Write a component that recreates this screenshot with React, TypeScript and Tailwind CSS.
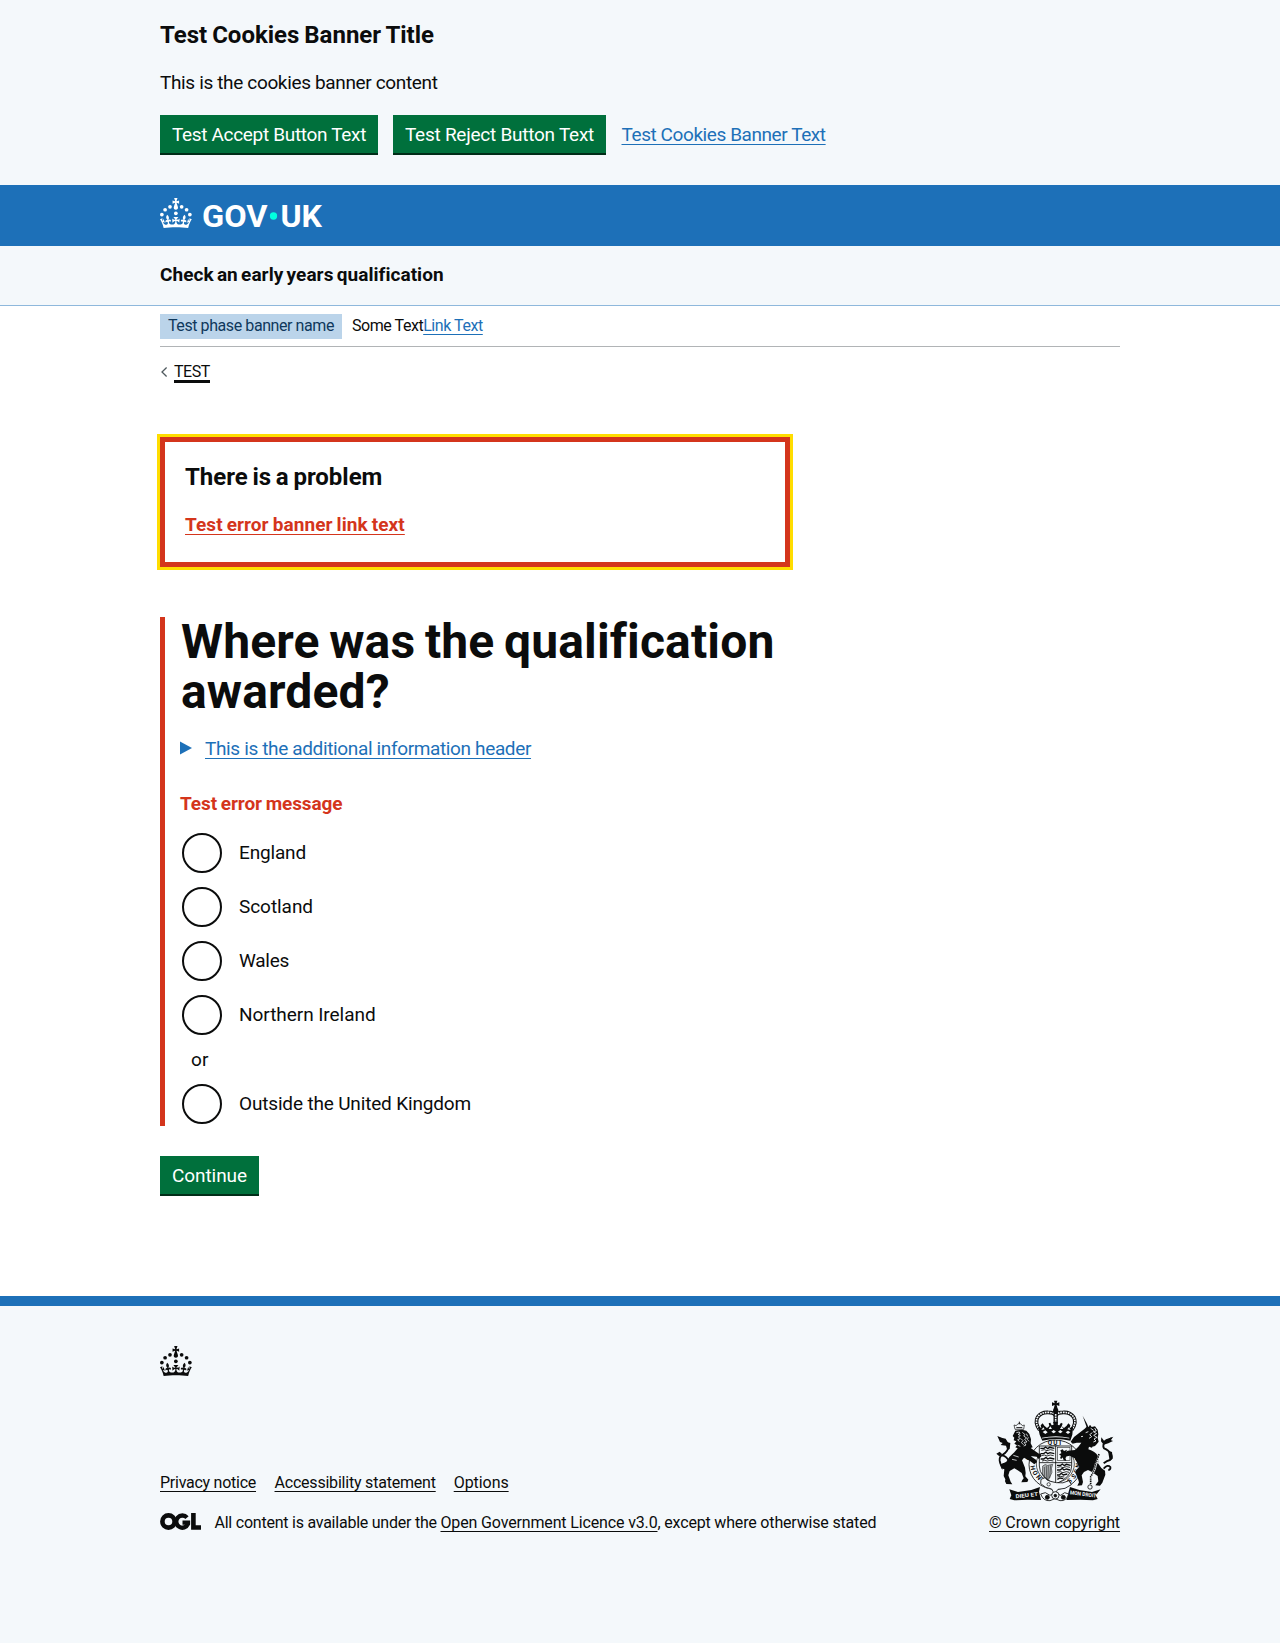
import type { ReactNode } from "react";

const CROWN_PATH =
  "M33.1,9.8c.2-.1.3-.3.5-.5l4.6,2.4v-6.8l-4.6,1.5c-.1-.2-.3-.3-.5-.5l1.9-5.9h-6.7l1.9,5.9c-.2.1-.3.3-.5.5l-4.6-1.5v6.8l4.6-2.4c.1.2.3.3.5.5l-2.6,8c-.9,2.8,1.2,5.7,4.1,5.7h0c3,0,5.1-2.9,4.1-5.7l-2.6-8ZM37,37.9s-3.4,3.8-4.1,6.1c2.2,0,4.2-.5,6.4-2.8l-.7,8.5c-2-2.8-4.4-4.1-5.7-3.8.1,3.1.5,6.7,5.8,7.2,3.7.3,6.7-1.5,7-3.8.4-2.6-2-4.3-3.7-1.6-1.4-4.5,2.4-6.1,4.9-3.2-1.9-4.5-1.8-7.7,2.4-10.9,3,4,2.6,7.3-1.2,11.1,2.4-1.3,6.2,0,4,4.6-1.2-2.8-3.7-2.2-4.2.2-.3,1.7.7,3.7,3,4.2,1.9.3,4.7-.9,7-5.9-1.3,0-2.4.7-3.9,1.7l2.4-8c.6,2.3,1.4,3.7,2.2,4.5.6-1.6.5-2.8,0-5.3l5,1.8c-2.6,3.6-5.2,8.7-7.3,17.5-7.4-1.1-15.7-1.7-24.5-1.7h0c-8.8,0-17.1.6-24.5,1.7-2.1-8.9-4.7-13.9-7.3-17.5l5-1.8c-.5,2.5-.6,3.7,0,5.3.8-.8,1.6-2.3,2.2-4.5l2.4,8c-1.5-1-2.6-1.7-3.9-1.7,2.3,5,5.2,6.2,7,5.9,2.3-.4,3.3-2.4,3-4.2-.5-2.4-3-3.1-4.2-.2-2.2-4.6,1.6-6,4-4.6-3.7-3.7-4.2-7.1-1.2-11.1,4.2,3.2,4.3,6.4,2.4,10.9,2.5-2.8,6.3-1.3,4.9,3.2-1.8-2.7-4.1-1-3.7,1.6.3,2.3,3.3,4.1,7,3.8,5.4-.5,5.7-4.2,5.8-7.2-1.3-.2-3.7,1-5.7,3.8l-.7-8.5c2.2,2.3,4.2,2.7,6.4,2.8-.7-2.3-4.1-6.1-4.1-6.1h10.6Z";

function CrownShape() {
  return (
    <g>
      <circle cx="20" cy="17.6" r="3.7" />
      <circle cx="10.2" cy="23.5" r="3.7" />
      <circle cx="3.7" cy="33.2" r="3.7" />
      <circle cx="31.7" cy="30.6" r="3.7" />
      <circle cx="43.3" cy="17.6" r="3.7" />
      <circle cx="53.2" cy="23.5" r="3.7" />
      <circle cx="59.7" cy="33.2" r="3.7" />
      <path d={CROWN_PATH} />
    </g>
  );
}

function GovUkLogo() {
  return (
    <svg viewBox="0 0 324 60" className="h-[30px] w-[162px] overflow-visible" fill="#fff">
      <CrownShape />
      <text x="84" y="57.5" fontFamily="Roboto, sans-serif" fontWeight="700" fontSize="61" textLength="131" lengthAdjust="spacingAndGlyphs">
        GOV
      </text>
      <circle cx="227" cy="36" r="7.3" fill="#00ffe0" />
      <text x="241" y="57.5" fontFamily="Roboto, sans-serif" fontWeight="700" fontSize="61" textLength="83" lengthAdjust="spacingAndGlyphs">
        UK
      </text>
    </svg>
  );
}

function Link({ className, children }: { className: string; children: ReactNode }) {
  return (
    <a
      href="#"
      className={`underline decoration-1 underline-offset-[3px] [text-decoration-skip-ink:none] ${className}`}
    >
      {children}
    </a>
  );
}

function Button({ className, children }: { className: string; children: ReactNode }) {
  return (
    <button
      type="button"
      className={`h-[38px] bg-[#00703c] text-center text-[19px] leading-[19px] text-white shadow-[0_2px_0_#002d18] ${className}`}
    >
      {children}
    </button>
  );
}

function Radio({ label, tracking }: { label: string; tracking: string }) {
  return (
    <label className="flex h-11 items-center">
      <span className="ml-0.5 size-10 rounded-full border-2 border-[#0b0c0c] bg-white" />
      <span className={`mb-0.5 ml-[17px] text-[19px] leading-[25px] ${tracking}`}>{label}</span>
    </label>
  );
}

function Crest() {
  return (
    <svg viewBox="36 30 375 306" className="h-[102px] w-[125px]" fill="#0b0c0c">
      {/* Crown */}
      <path d="M222 32h10l-2 8 8-3v11l-8-3 3 12h-12l3-12-8 3v-11l8 3z" />
      <circle cx="227" cy="62" r="8" />
      <g fill="none" stroke="#0b0c0c">
        <path d="M179 120C156 88 178 66 204 67c12 0 20 4 23 10c3-6 11-10 23-10c26-1 48 21 25 53" strokeWidth="11" />
        <path d="M179 120C156 88 178 66 204 67c12 0 20 4 23 10c3-6 11-10 23-10c26-1 48 21 25 53" stroke="#f4f8fb" strokeWidth="5" strokeDasharray="5 2.5" />
        <path d="M227 66v44" strokeWidth="13" />
        <path d="M227 72v36" stroke="#f4f8fb" strokeWidth="5" strokeDasharray="5 2.5" />
      </g>
      <path d="M174 110l10 4-2-8 6-6 5 7 8 7 7-6-2-8 5-2 4 8 8-2-4-8h15l-4 8 8 2 5-8 5 3-3 8 7 5 8-7 5-7 6 6-2 8 10-4-2 24-6 18q-42-10-84 0l-8-18z" />
      <g fill="#f4f8fb">
        <path d="M188 126l8-5 7 6-7 5zM214 125l7-5 7 5-7 5zM234 125l7-5 7 5-7 5zM257 127l7-5 7 5-7 5z" />
        <path d="M186 143q41-9 82 0v2.5q-41-8-82 0zM184 120l6-8 4 6zM206 117l5-8 5 8zM240 117l5-8 5 8zM262 118l5-6 5 8z" />
      </g>
      {/* Garter and shield */}
      <ellipse cx="226" cy="224" rx="79" ry="74" fill="#f4f8fb" stroke="#0b0c0c" strokeWidth="2.5" />
      <ellipse cx="226" cy="222" rx="57" ry="55" fill="none" stroke="#0b0c0c" strokeWidth="2" />
      <g fontFamily="Roboto, sans-serif" fontWeight="700" fontSize="19">
        <text x="203" y="166">Q</text>
        <text x="220" y="165">U</text>
        <text x="238" y="166">I</text>
        <text transform="translate(153 212) rotate(-80)">N</text>
        <text transform="translate(151 228) rotate(80)">H</text>
        <text transform="translate(157 246) rotate(62)">O</text>
        <text transform="translate(167 262) rotate(48)">N</text>
        <text transform="translate(300 214) rotate(-95)">A</text>
        <text transform="translate(299 234) rotate(-82)">N</text>
        <text transform="translate(293 252) rotate(-65)">E</text>
        <text transform="translate(283 268) rotate(-50)">S</text>
        <text transform="translate(268 281) rotate(-38)">S</text>
      </g>
      <path d="M178 168h97v60q0 34-48 54q-49-20-49-54z" fill="#f4f8fb" stroke="#0b0c0c" strokeWidth="2.5" />
      <path d="M227 168v112M178 218h97" stroke="#0b0c0c" strokeWidth="2.5" />
      <g fill="none" stroke="#0b0c0c" strokeWidth="4">
        <path d="M181 175h11l5-4 6 5 6-4 14 3M182 191h9l7-5 5 5 7-3 13 3M182 207h9l7-5 5 5 7-3 13 3" />
        <path d="M184 181l9-2 8 3 10-3 10 2M184 197l9-2 8 3 10-3 10 2M186 213l8-2 8 2 8-2 10 2" strokeWidth="2.5" />
        <path d="M231 226h11l5-4 6 5 6-4 13 3M231 240h9l7-5 5 5 7-3 11 3M231 255h7l6-5 6 5 12-3M232 268l8-4 10 2" />
        <path d="M232 232l9-2 8 3 10-3 11 2M232 247l9-2 8 3 10-3 8 2M232 261l9-2 12 2" strokeWidth="2.5" />
      </g>
      <rect x="233" y="173" width="37" height="39" fill="none" stroke="#0b0c0c" strokeWidth="1.6" />
      <path d="M241 181l7-3 4 5 9-4-3 8 6-1-1 5-6 2 2 8-4 4-4-6-6 7-5-1 3-8-6-4 7-3-1-4z" />
      <path d="M188 228q8-8 14-2l16-3q-6 12-2 24l-10 22q-16-6-19-20z" fill="#0b0c0c" opacity=".3" />
      <path d="M193 231l1 28M199 228l1 36M205 227l-1 40M212 226l-3 38M188 228q8-8 14-2l16-3q-6 12-2 24l-10 22q-16-6-19-20z" fill="none" stroke="#0b0c0c" strokeWidth="1.5" />
      <path d="M183 268l12-5q4 8 16 11l18 4q20 4 38-6l7 12q-18 15-40 14l-11 14-8-15q-19-2-33-16z" fill="#f4f8fb" stroke="#0b0c0c" strokeWidth="2.5" />
      <circle cx="206" cy="283" r="5" fill="none" stroke="#0b0c0c" strokeWidth="2" />
      {/* Lion */}
      <g>
        <path d="M105 118l-3-13 7 2q3-6 9-7q6 1 9 7l6-2-2 13z" fill="#f4f8fb" stroke="#0b0c0c" strokeWidth="2" />
        <path d="M118 95v8M109 113h18" stroke="#0b0c0c" strokeWidth="3" />
        <path d="M106 122l20-3 13 3 9 10 5 16-1 12 6 12-6 2 26 18 4-2 2 9-8 8-6-7-19-2 18 12 2 6-8 7-13-10-18-10-6 8 9 22 2 16-1 10 9 10-3 7-18 1 3-7 4-5-6-16-12-8-10-6-14 8-4 13 7 19 5 8-18-1-4-8 1-6-5-10 2-20-9-3 3-14 12-6 9-14 15-14 10-12-7-3 5-6-8-5 6-7-8-3 2-8-5-5z" />
        <path d="M109 128l9-2 2 5-6 2 7 4-6 4 6 5-8 3 5 6M127 127l8 7-4 4 9 6-6 4 7 8-9 1 6 8-7 3M139 131l4 8M145 142l-3 6 5 6M123 146l6 6-5 6 7 6M113 166l8 3M100 196l16 5M96 208l14 3" fill="none" stroke="#f4f8fb" strokeWidth="2.3" />
        <path d="M84 226q-14-10-20 2M88 214q-10-17-22-18q-8 3-7 16q2 13 8 17M66 196q21-13 19-29q-4-16-25-21" fill="none" stroke="#0b0c0c" strokeWidth="5.5" />
        <path d="M52 138l15 6 10 2 6 11 8 2-2 18-7 4-4-14-16-2 6-6-8-3zM49 191l10-6 8 8-9 6zM60 226l8-2-1 16z" />
      </g>
      {/* Unicorn */}
      <g>
        <path d="M308 77l13 24 5 12-6-1z" />
        <path d="M314 116l6-6 6 1 4-7 5 7 10-2 8 10 2 14-2 10 3 12-6 8-5 5-8 2-2 7 16 10 6 18-3 15 10 14 11 8 1 12-9 24-7 9-14-1 9-12-2-16-17-12-12-6-12 6-7 10 4 20-3 10-14 1 5-10-4-14-7-14 3-10 9-8-14-26-15-8-14 3 4 13-8-2-6-17 18-12 22-2 10-10 9-12-14 0-12 3-6-6 10-14z" />
        <path d="M332 115l9 6M344 114l5 9-9 2 10 6-9 5 10 6-9 5 6 6-8 3M337 128l-8 6 6 6-8 5" fill="none" stroke="#f4f8fb" strokeWidth="2.6" />
        <path d="M317 128l8-3M303 140l6-1" stroke="#f4f8fb" strokeWidth="2.6" />
        <path d="M326 174q22 6 31 22q-4 18-10 28q-3 20-16 36l-1 22" fill="none" stroke="#f4f8fb" strokeWidth="7" />
        <path d="M357 192q-5 18-11 30q-2 20-14 38v22" fill="none" stroke="#0b0c0c" strokeWidth="5" strokeDasharray="4 2.5" />
        <circle cx="330" cy="291" r="6.5" fill="none" stroke="#0b0c0c" strokeWidth="2.5" />
        <path d="M371 236q12-14 20-5q2 8-6 9M371 220q10-8 19-10q8-6 4-16q-8-14-22-19q-6-12 5-19l18-12" fill="none" stroke="#0b0c0c" strokeWidth="5.5" />
        <path d="M364 142l8 10 6-4 22-8-8 10 7 3-14 7-14 4-8-10zM384 182l12 4 2 20-9 6-2-12z" />
      </g>
      {/* Motto scroll */}
      <path d="M88 298l26 8 40-6 26-9-3 14 6 25-40-1-40 2-14-4 5-11z" />
      <path d="M362 298l-26 8-38-6-28-9-4 14-7 25 42-1 38 2 14-4-6-11z" />
      <g fill="#f4f8fb" fontFamily="Roboto, sans-serif" fontWeight="700" fontSize="16">
        <text transform="translate(107 325) rotate(-6)" textLength="68" lengthAdjust="spacingAndGlyphs">DIEU ET</text>
        <text transform="translate(269 313) rotate(7)" textLength="80" lengthAdjust="spacingAndGlyphs">MON DROIT</text>
      </g>
      <g fill="#f4f8fb" stroke="#0b0c0c" strokeWidth="2.5">
        <path d="M182 312q8 22 28 20l15-6 15 6q20 2 26-20l-12-4-12 8-16-8-16 8-14-8z" />
        <circle cx="226" cy="316" r="11" />
        <circle cx="202" cy="322" r="6" fill="#0b0c0c" />
        <circle cx="250" cy="322" r="6" fill="#0b0c0c" />
        <circle cx="226" cy="317" r="4" fill="#0b0c0c" />
      </g>
    </svg>
  );
}

function OglLogo() {
  return (
    <svg viewBox="0 0 41 17" className="h-[17px] w-[41px] overflow-visible" fill="none" stroke="#0b0c0c">
      <circle cx="8.5" cy="8.5" r="6.1" strokeWidth="4.6" />
      <path d="M27 4.6A6.1 6.1 0 1 0 28 11V9.6H22.5" strokeWidth="4.3" />
      <path d="M33.4 0v14.5H41" strokeWidth="4.6" />
    </svg>
  );
}

export default function App() {
  return (
    <div className="min-h-[1643px] bg-white font-['Roboto',sans-serif] text-[#0b0c0c]">
      <section className="h-[185px] bg-[#f4f8fb] pt-5">
        <div className="mx-auto w-[960px]">
          <h2 className="text-2xl leading-[30px] font-bold tracking-[-0.02px] [word-spacing:-0.9px]">Test Cookies Banner Title</h2>
          <p className="mt-5 text-[19px] leading-[25px] tracking-[-0.353px]">This is the cookies banner content</p>
          <div className="mt-5 flex items-center">
            <Button className="w-[218px] tracking-[-0.323px]">Test Accept Button Text</Button>
            <Button className="ml-[15px] w-[213px] tracking-[-0.25px]">Test Reject Button Text</Button>
            <Link className="ml-[15.5px] text-[19px] leading-[25px] tracking-[-0.422px] text-[#1d70b8]">
              Test Cookies Banner Text
            </Link>
          </div>
        </div>
      </section>

      <header>
        <div className="h-[61px] bg-[#1d70b8] pt-[13px]">
          <div className="mx-auto w-[960px]">
            <GovUkLogo />
          </div>
        </div>
        <div className="h-[60px] border-b border-[#8eb8dc] bg-[#f4f8fb] pt-4">
          <p className="mx-auto w-[960px] text-[19px] leading-[25px] font-bold tracking-[0.05px] [word-spacing:-1.5px]">
            Check an early years qualification
          </p>
        </div>
      </header>

      <div className="mx-auto w-[960px]">
        <div className="flex h-[41px] items-start border-b border-[#b1b4b6] pt-2 text-base">
          <strong className="h-[25px] w-[182px] bg-[#bbd4ea] pt-0.5 pl-2 leading-5 font-normal tracking-[-0.419px] text-[#0f385c]">
            Test phase banner name
          </strong>
          <span className="ml-2.5 pt-0.5 leading-5 tracking-[-0.449px]">Some Text</span>
          <Link className="pt-0.5 leading-5 tracking-[-0.44px] text-[#1d70b8]">Link Text</Link>
        </div>

        <div className="flex h-[90px] items-start pt-[15px]">
          <svg viewBox="0 0 7 10" className="mt-[5px] ml-[1px] h-[10px] w-[7px]" fill="none" stroke="#505a5f" strokeWidth="1.3">
            <path d="M5.6 0.5L1 5l4.6 4.5" />
          </svg>
          <a
            href="#"
            className="ml-1.5 text-base leading-5 tracking-[-0.422px] underline decoration-[3px] underline-offset-[3px] [text-decoration-skip-ink:none]"
          >
            TEST
          </a>
        </div>

        <main>
          <section className="h-[130px] w-[630px] border-[5px] border-[#d4351c] p-5 outline-[3px] outline-[#ffdd00]">
            <h2 className="text-2xl leading-[30px] font-bold tracking-[-0.02px] [word-spacing:-1.2px]">There is a problem</h2>
            <div className="mt-5 text-[19px] leading-[25px] font-bold">
              <Link className="tracking-[0.08px] text-[#d4351c] [word-spacing:-0.8px]">Test error banner link text</Link>
            </div>
          </section>

          <form className="mt-[50px]">
            <div className="h-[509px] w-[630px] border-l-[5px] border-[#d4351c] pl-[15px]">
              <h1 className="pl-px text-5xl leading-[50px] font-bold tracking-[0.14px] [word-spacing:-2.4px]">
                Where was the qualification awarded?
              </h1>
              <div className="mt-[19px] flex h-[25px] items-start">
                <svg viewBox="0 0 12 14" className="mt-[5px] h-[14px] w-3" fill="#1d70b8">
                  <path d="M0 0.5L12 7 0 13.5z" />
                </svg>
                <Link className="ml-[13px] text-[19px] leading-[25px] tracking-[-0.359px] text-[#1d70b8]">
                  This is the additional information header
                </Link>
              </div>
              <p className="mt-[30px] text-[19px] leading-[25px] font-bold tracking-[-0.1px] [word-spacing:-0.8px] text-[#d4351c]">
                Test error message
              </p>
              <div className="mt-[15px] flex flex-col gap-2.5">
                <Radio label="England" tracking="tracking-[-0.161px]" />
                <Radio label="Scotland" tracking="tracking-[-0.055px]" />
                <Radio label="Wales" tracking="tracking-[-0.277px]" />
                <Radio label="Northern Ireland" tracking="tracking-[-0.05px]" />
              </div>
              <p className="mt-2.5 mb-2.5 pl-[11px] text-[19px] leading-[25px] tracking-[0.113px]">or</p>
              <Radio label="Outside the United Kingdom" tracking="tracking-[-0.163px]" />
            </div>
            <Button className="mt-[30px] block w-[99px] tracking-[-0.072px]">Continue</Button>
          </form>
        </main>
      </div>

      <footer className="mt-[102px] h-[347px] border-t-[10px] border-[#1d70b8] bg-[#f4f8fb] pt-10">
        <div className="mx-auto w-[960px]">
          <svg viewBox="0 0 64 60" className="h-[30px] w-8" fill="#0b0c0c">
            <CrownShape />
          </svg>
          <div className="mt-6 flex items-end justify-between">
            <div>
              <div className="flex text-base leading-5">
                <Link className="tracking-[-0.257px]">Privacy notice</Link>
                <Link className="ml-[18.5px] tracking-[-0.21px]">Accessibility statement</Link>
                <Link className="ml-[18px] tracking-[-0.06px]">Options</Link>
              </div>
              <div className="mt-5 flex items-start text-base leading-5">
                <OglLogo />
                <p className="ml-[13.5px] whitespace-pre">
                  <span className="tracking-[-0.234px]">All content is available under the </span>
                  <Link className="tracking-[-0.147px]">Open Government Licence v3.0</Link>
                  <span className="tracking-[-0.175px]">, except where otherwise stated</span>
                </p>
              </div>
            </div>
            <div className="flex w-[131px] flex-col items-center">
              <Crest />
              <Link className="mt-[11px] text-base leading-5 whitespace-nowrap tracking-[-0.087px]">© Crown copyright</Link>
            </div>
          </div>
        </div>
      </footer>
    </div>
  );
}
